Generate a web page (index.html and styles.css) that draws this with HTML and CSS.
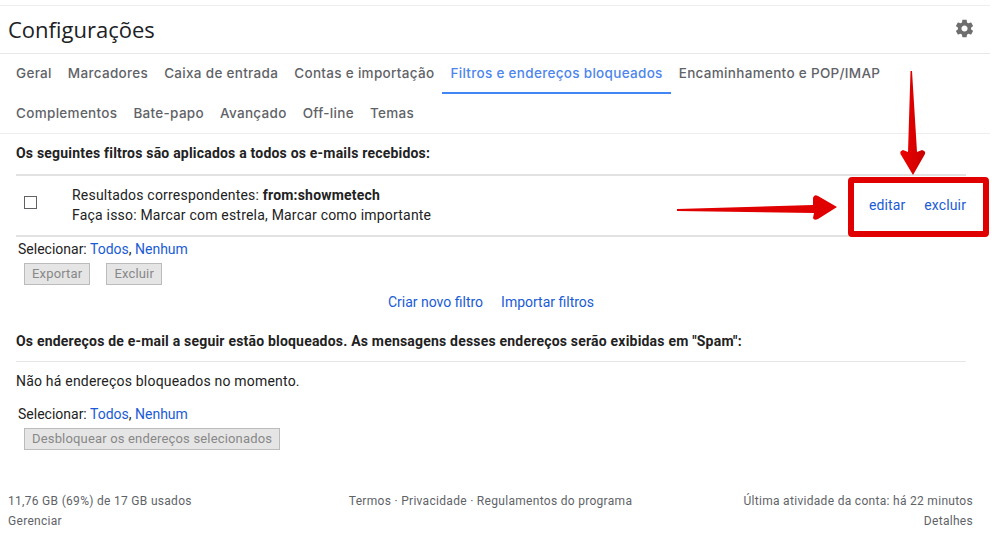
FILE: index.html
```html
<!DOCTYPE html>
<html lang="pt-BR">
<head>
<meta charset="utf-8">
<title>Configurações</title>
<link rel="stylesheet" href="styles.css">
</head>
<body>
<div class="page">
  <header class="head">
    <h1>Configurações</h1>
    <svg class="gear" viewBox="0 0 24 24" width="24" height="24"><path fill="#6e6e6e" d="M19.43 12.98c.04-.32.07-.64.07-.98s-.03-.66-.07-.98l2.11-1.65c.19-.15.24-.42.12-.64l-2-3.46c-.12-.22-.39-.3-.61-.22l-2.49 1c-.52-.4-1.08-.73-1.69-.98l-.38-2.65C14.46 2.18 14.25 2 14 2h-4c-.25 0-.46.18-.49.42l-.38 2.65c-.61.25-1.17.59-1.69.98l-2.49-1c-.23-.09-.49 0-.61.22l-2 3.46c-.13.22-.07.49.12.64l2.11 1.65c-.04.32-.07.65-.07.98s.03.66.07.98l-2.11 1.65c-.19.15-.24.42-.12.64l2 3.46c.12.22.39.3.61.22l2.49-1c.52.4 1.08.73 1.69.98l.38 2.65c.03.24.24.42.49.42h4c.25 0 .46-.18.49-.42l.38-2.65c.61-.25 1.17-.59 1.69-.98l2.49 1c.23.09.49 0 .61-.22l2-3.46c.12-.22.07-.49-.12-.64l-2.11-1.65zM12 15.5c-1.93 0-3.5-1.57-3.5-3.5s1.57-3.5 3.5-3.5 3.5 1.57 3.5 3.5-1.57 3.5-3.5 3.5z"/></svg>
  </header>
  <nav class="tabs">
    <a class="tab">Geral</a><a class="tab">Marcadores</a><a class="tab">Caixa de entrada</a><a class="tab">Contas e importação</a><a class="tab active">Filtros e endereços bloqueados</a><a class="tab">Encaminhamento e POP/IMAP</a><a class="tab">Complementos</a><a class="tab">Bate-papo</a><a class="tab">Avançado</a><a class="tab">Off-line</a><a class="tab">Temas</a>
  </nav>
  <main class="content">
    <h2 class="section-title first">Os seguintes filtros são aplicados a todos os e-mails recebidos:</h2>
    <div class="filter-row">
      <span class="check"></span>
      <div class="filter-text">
        <div>Resultados correspondentes: <b>from:showmetech</b></div>
        <div>Faça isso: Marcar com estrela, Marcar como importante</div>
      </div>
      <div class="filter-actions"><a class="link">editar</a><a class="link">excluir</a></div>
    </div>
    <div class="select">Selecionar: <a class="link">Todos</a>, <a class="link">Nenhum</a></div>
    <div class="buttons"><span class="btn">Exportar</span><span class="btn">Excluir</span></div>
    <div class="center-links"><a class="link">Criar novo filtro</a><a class="link">Importar filtros</a></div>
    <h2 class="section-title second">Os endereços de e-mail a seguir estão bloqueados. As mensagens desses endereços serão exibidas em "Spam":</h2>
    <div class="none">Não há endereços bloqueados no momento.</div>
    <div class="select select-two">Selecionar: <a class="link">Todos</a>, <a class="link">Nenhum</a></div>
    <div class="buttons"><span class="btn">Desbloquear os endereços selecionados</span></div>
  </main>
  <footer class="foot">
    <div class="foot-col"><div>11,76 GB (69%) de 17 GB usados</div><div>Gerenciar</div></div>
    <div class="foot-col"><div>Termos · Privacidade · Regulamentos do programa</div></div>
    <div class="foot-col foot-right"><div>Última atividade da conta: há 22 minutos</div><div>Detalhes</div></div>
  </footer>
</div>
<svg class="overlay" width="997" height="549" viewBox="0 0 997 549">
  <defs>
    <linearGradient id="av" x1="0" x2="1" y1="0" y2="0"><stop offset="0" stop-color="#ee0000"/><stop offset="1" stop-color="#c80000"/></linearGradient>
  </defs>
  <path fill="url(#av)" d="M910.5 71 L912 71 L917 152 L922 150 Q926 151 925 154 L913 175 L900.5 154 Q899.5 151 903 150 L908 152 Z"/>
  <path fill="#e00000" d="M677 209 L813 205 L813 198 Q814 194 818 196 L837 207 L818 219 Q814 221 813 218 L814 213 L677 211 Z"/>
  <rect class="redbox" x="851" y="180" width="135" height="54" rx="1"/>
</svg>
</body>
</html>
```
FILE: styles.css
```css
* { box-sizing: border-box; }
html, body { margin: 0; padding: 0; background: #fff; }
body { width: 997px; height: 549px; overflow: hidden; position: relative; font-family: Roboto, "Liberation Sans", sans-serif; font-size: 14px; color: #222; letter-spacing: 0.2px; }
.page { margin-top: 5px; border-top: 1px solid #eee; width: 990px; }
.head { height: 48px; border-bottom: 1px solid #e8e8e8; display: flex; align-items: center; justify-content: space-between; padding: 0 15px 0 8px; }
.head h1 { margin: 0; font-family: "Open Sans", sans-serif; font-weight: 400; font-size: 22px; color: #202124; line-height: 47px; letter-spacing: 0; }
.gear { margin-top: -3px; width: 21px; height: 21px; }
.tabs { display: flex; flex-wrap: wrap; height: 80px; padding: 0 8px; border-bottom: 1px solid #eee; }
.tab { height: 40px; padding: 0 8px; line-height: 39px; font-family: Inter, "Open Sans", sans-serif; font-size: 13.5px; font-weight: 500; letter-spacing: 0.31px; color: #5f6368; white-space: nowrap; }
.tab.active { color: #4d85ee; border-bottom: 2px solid #4285f4; }
.tabs .tab:nth-child(6) { margin-right: 60px; }
.content { padding: 0 24px 0 16px; }
.section-title { margin: 0; font-size: 14px; font-weight: 700; color: #222; }
.section-title.first { padding-top: 11px; height: 40px; }
.filter-row { display: flex; border-top: 2px solid #e2e2e2; border-bottom: 2px solid #e2e2e2; height: 63px; padding-top: 9px; line-height: 20px; }
.check { width: 13px; height: 13px; border: 1px solid #5f6368; margin: 11px 0 0 8px; flex: none; }
.filter-text { margin-left: 35px; flex: 1; }
.filter-actions { display: flex; gap: 19px; margin-top: 10px; letter-spacing: 0.12px; }
.link { color: #1a5bd6; }
.select { padding-left: 2px; line-height: 20px; margin-top: 2px; letter-spacing: 0; }
.buttons { display: flex; gap: 16px; padding-left: 8px; margin-top: 4px; }
.btn { height: 22px; line-height: 20px; padding: 0 7px; background: #e5e5e5; border: 1px solid #bbb; color: #888; font-size: 13px; letter-spacing: 0.17px; }
.center-links { display: flex; justify-content: center; gap: 18px; margin-top: 7px; line-height: 20px; letter-spacing: 0; }
.section-title.second { margin-top: 21px; height: 27px; }
.none { border-top: 1px solid #e6e6e6; padding-top: 9px; line-height: 20px; margin-top: 1px; }
.select-two { margin-top: 13px; }
.foot { display: grid; grid-template-columns: 1fr auto 1fr; padding: 0 17px 0 8px; margin-top: 41px; font-size: 12px; color: #5f6368; line-height: 20px; letter-spacing: 0.3px; }
.foot-right { text-align: right; }
.overlay { position: absolute; left: 0; top: 0; pointer-events: none; }
.redbox { fill: none; stroke: #e00000; stroke-width: 6px; }
```
